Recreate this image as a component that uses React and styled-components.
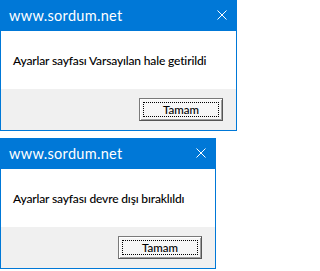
import React from 'react'
import styled, { createGlobalStyle } from 'styled-components'

const GlobalStyle = createGlobalStyle`
  html, body {
    margin: 0;
    padding: 0;
    background: #ffffff;
  }
`

const Page = styled.div`
  display: flex;
  flex-direction: column;
  align-items: flex-start;
  gap: 7px;
`

const Dialog = styled.div`
  width: ${p => p.$width}px;
  box-sizing: border-box;
  border: 1px solid #0078d7;
  border-top: none;
  background: #ffffff;
  font-family: Lato, "Noto Sans", sans-serif;
`

const TitleBar = styled.div`
  height: 31px;
  margin: 0 -1px;
  background: #0078d7;
  display: flex;
  align-items: center;
  justify-content: space-between;
  padding: 0 10px 0 9px;
  color: #ffffff;
  font-size: 14.5px;
  letter-spacing: 0.3px;
`

const CloseIcon = styled.svg`
  width: 10px;
  height: 10px;
  display: block;
  margin-top: -2px;
`

const Body = styled.div`
  height: 58px;
  box-sizing: border-box;
  padding: 22px 0 0 12px;
  font-size: 12px;
  font-weight: 500;
  line-height: 16px;
  letter-spacing: -0.15px;
  color: #000000;
  white-space: nowrap;
`

const Footer = styled.div`
  height: 41px;
  box-sizing: border-box;
  background: #f0f0f0;
  display: flex;
  align-items: center;
  justify-content: flex-end;
  padding-right: 13px;
`

const Button = styled.button`
  width: 84px;
  height: 23px;
  box-sizing: border-box;
  border: 1px solid #7a7a7a;
  border-right-color: #555555;
  border-bottom-color: #555555;
  box-shadow: inset 1px 1px 0 #ffffff, inset -1px -1px 0 #a0a0a0;
  background: #f6f6f6;
  outline: 1px dotted #000000;
  outline-offset: -5px;
  padding: 0;
  font-family: Lato, "Liberation Sans", sans-serif;
  font-size: 11.5px;
  font-weight: 500;
  color: #000000;
`

function MessageBox({ width, message }) {
  return (
    <Dialog $width={width}>
      <TitleBar>
        <span>www.sordum.net</span>
        <CloseIcon viewBox="0 0 10 10">
          <path d="M0.5 0.5 L9.5 9.5 M9.5 0.5 L0.5 9.5" stroke="#ffffff" strokeWidth="1" fill="none" />
        </CloseIcon>
      </TitleBar>
      <Body>{message}</Body>
      <Footer>
        <Button>Tamam</Button>
      </Footer>
    </Dialog>
  )
}

export default function App() {
  return (
    <Page>
      <GlobalStyle />
      <MessageBox width={237} message="Ayarlar sayfası Varsayılan hale getirildi" />
      <MessageBox width={216} message="Ayarlar sayfası devre dışı bıraklıldı" />
    </Page>
  )
}
